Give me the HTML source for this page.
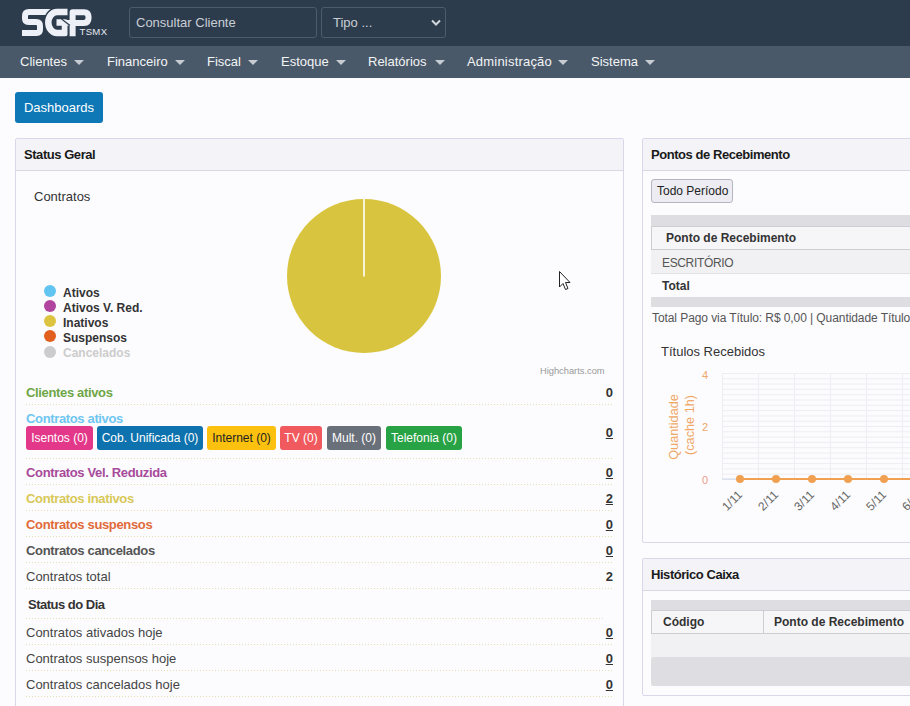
<!DOCTYPE html>
<html><head><meta charset="utf-8">
<style>
*{box-sizing:border-box;margin:0;padding:0}
html,body{width:910px;height:706px;overflow:hidden;background:#fcfcfe;font-family:"Liberation Sans",sans-serif;color:#333;position:relative}
.a{position:absolute;white-space:nowrap}
#top{left:0;top:0;width:910px;height:46px;background:#2d3c4d}
#nav{left:0;top:46px;width:910px;height:32px;background:#4a5969}
.inp{border:1px solid #4d5b6a;border-radius:3px;height:31px;top:7px}
.ph{color:#c9cfd6;font-size:13px;top:15px}
.nv{color:#f2f4f6;font-size:13px;top:54px}
.caret{width:0;height:0;border-left:5px solid transparent;border-right:5px solid transparent;border-top:5px solid #c6ccd2;top:60px}
#btn{left:15px;top:92px;width:88px;height:31px;background:#0e78b6;border-radius:3px;color:#fff;font-size:13px;line-height:31px;text-align:center}
.panel{border:1px solid #d8d8e8;border-radius:2px;background:#fcfcfe}
.ph2{background:#f4f4f8;border-bottom:1px solid #d8d8e2;height:32px}
.ptitle{font-size:13px;font-weight:bold;color:#1a1a1a;letter-spacing:-0.45px}
.rt{font-size:13px;font-weight:bold;letter-spacing:-0.35px}
.rn{font-size:13px;color:#444}
.ln{height:1px;background:repeating-linear-gradient(90deg,#e6e0b0 0 1px,transparent 1px 3px);left:26px;width:586px}
.val{font-size:13px;font-weight:bold;color:#333;left:601px;width:12px;text-align:right}
.u{text-decoration:underline}
.bd{top:426px;height:24px;border-radius:3px;font-size:12px;line-height:24px;color:#fff;text-align:center}
.lg{font-size:12px;font-weight:bold;color:#333;left:63px}
.dot{width:12px;height:12px;border-radius:50%;left:44px}
</style></head><body>
<div class="a" id="top"></div>
<div class="a" id="nav"></div>
<!-- logo -->
<svg class="a" style="left:0px;top:0px" width="120" height="46" viewBox="0 0 120 46">
<g fill="none" stroke="#eef0f7" stroke-width="6" stroke-linejoin="round">
<path d="M52 12 L29 12 Q25 12 25 16 L25 18.5 Q25 22 28.5 22 L36 22 Q40 22 40 26 L40 29.5 Q40 33 36.5 33 L22 33"/>
</g>
<path d="M57 8.2 A 12.2 14.3 0 0 0 44.6 22.5 A 12.2 14.3 0 0 0 57 36.8" fill="none" stroke="#2d3c4d" stroke-width="2"/>
<g fill="none" stroke="#eef0f7" stroke-width="6.5" stroke-linejoin="round">
<path d="M67.5 12 L57 12 A 8.7 10.5 0 0 0 48.3 22.5 A 8.7 10.5 0 0 0 57 33 L65 33 L65 22.5 L56.5 22.5"/>
<path d="M72.6 36.2 L72.6 12.2 L84 12.2 Q88.6 12.2 88.6 17.6 Q88.6 23 84 23 L66 23" stroke-width="6"/>
</g>
<path d="M61.5 19 L70 25.5" stroke="#2d3c4d" stroke-width="1.2"/>
<path d="M68.2 36.5 L68.2 25.5" stroke="#2d3c4d" stroke-width="1.4"/>
<text x="79.5" y="34.8" font-family="Liberation Sans" font-size="9.6" fill="#e6e9f0" letter-spacing="0.3">TSMX</text>
</svg>
<div class="a inp" style="left:129px;width:188px"></div>
<div class="a ph" style="left:136px">Consultar Cliente</div>
<div class="a inp" style="left:321px;width:125px"></div>
<div class="a ph" style="left:333px">Tipo ...</div>
<svg class="a" style="left:430px;top:18px" width="12" height="10" viewBox="0 0 12 10"><path d="M2 2.5 L6 6.5 L10 2.5" stroke="#d0d6dc" stroke-width="2" fill="none"/></svg>

<div class="a nv" style="left:20px">Clientes</div><div class="a caret" style="left:74px"></div>
<div class="a nv" style="left:107px">Financeiro</div><div class="a caret" style="left:175px"></div>
<div class="a nv" style="left:207px">Fiscal</div><div class="a caret" style="left:248px"></div>
<div class="a nv" style="left:281px">Estoque</div><div class="a caret" style="left:336px"></div>
<div class="a nv" style="left:368px">Relatórios</div><div class="a caret" style="left:435px"></div>
<div class="a nv" style="left:467px;letter-spacing:0.2px">Administração</div><div class="a caret" style="left:558px"></div>
<div class="a nv" style="left:591px">Sistema</div><div class="a caret" style="left:645px"></div>

<div class="a" id="btn">Dashboards</div>

<!-- left panel -->
<div class="a panel" style="left:15px;top:138px;width:609px;height:600px"></div>
<div class="a ph2" style="left:16px;top:139px;width:607px"></div>
<div class="a ptitle" style="left:24px;top:147px">Status Geral</div>

<div class="a" style="left:34px;top:189px;font-size:13px;color:#333">Contratos</div>
<svg class="a" style="left:280px;top:190px" width="170" height="170" viewBox="0 0 170 170">
<circle cx="84" cy="86" r="77" fill="#d8c43e"/>
<line x1="84" y1="9" x2="84" y2="86.5" stroke="#fff" stroke-width="1.6"/>
</svg>
<div class="a dot" style="top:285px;background:#62c4f0"></div>
<div class="a dot" style="top:300px;background:#b0449e"></div>
<div class="a dot" style="top:315px;background:#dcc440"></div>
<div class="a dot" style="top:330px;background:#e2601e"></div>
<div class="a dot" style="top:346px;background:#cccccc"></div>
<div class="a lg" style="top:286px">Ativos</div>
<div class="a lg" style="top:301px">Ativos V. Red.</div>
<div class="a lg" style="top:316px">Inativos</div>
<div class="a lg" style="top:331px">Suspensos</div>
<div class="a lg" style="top:346px;color:#cccccc">Cancelados</div>
<div class="a" style="left:540px;top:366px;font-size:9.3px;color:#999">Highcharts.com</div>
<!-- cursor -->
<svg class="a" style="left:558px;top:270px" width="14" height="22" viewBox="0 0 14 22"><path d="M1.5 1.5 L1.5 17 L5 13.5 L7.5 19.5 L10 18.5 L7.5 12.5 L12 12.5 Z" fill="#fff" stroke="#222" stroke-width="1"/></svg>

<!-- rows -->
<div class="a rt" style="left:26px;top:385px;color:#6ea648">Clientes ativos</div>
<div class="a val" style="top:385px">0</div>
<div class="a ln" style="top:404px"></div>
<div class="a rt" style="left:26px;top:411px;color:#6ec6f0">Contratos ativos</div>
<div class="a val u" style="top:425px">0</div>
<div class="a bd" style="left:26px;width:67px;background:#e3388a">Isentos (0)</div>
<div class="a bd" style="left:97px;width:106px;background:#0d72ad">Cob. Unificada (0)</div>
<div class="a bd" style="left:207px;width:69px;background:#fcc10f;color:#222">Internet (0)</div>
<div class="a bd" style="left:280px;width:42px;background:#f05a5e">TV (0)</div>
<div class="a bd" style="left:327px;width:54px;background:#6a7079">Mult. (0)</div>
<div class="a bd" style="left:386px;width:76px;background:#27a244">Telefonia (0)</div>
<div class="a ln" style="top:458px"></div>
<div class="a rt" style="left:26px;top:465px;color:#a74a9a">Contratos Vel. Reduzida</div>
<div class="a val u" style="top:465px">0</div>
<div class="a ln" style="top:484px"></div>
<div class="a rt" style="left:26px;top:491px;color:#d8c858">Contratos inativos</div>
<div class="a val u" style="top:491px">2</div>
<div class="a ln" style="top:510px"></div>
<div class="a rt" style="left:26px;top:517px;color:#e06a3a">Contratos suspensos</div>
<div class="a val u" style="top:517px">0</div>
<div class="a ln" style="top:536px"></div>
<div class="a rt" style="left:26px;top:543px;color:#555">Contratos cancelados</div>
<div class="a val u" style="top:543px">0</div>
<div class="a ln" style="top:562px"></div>
<div class="a rn" style="left:26px;top:569px">Contratos total</div>
<div class="a val" style="top:569px">2</div>
<div class="a ln" style="top:588px"></div>
<div class="a rt" style="left:28px;top:597px;color:#333;letter-spacing:-0.5px">Status do Dia</div>
<div class="a ln" style="top:618px;width:578px"></div>
<div class="a rn" style="left:26px;top:625px">Contratos ativados hoje</div>
<div class="a val u" style="top:625px">0</div>
<div class="a ln" style="top:644px"></div>
<div class="a rn" style="left:26px;top:651px">Contratos suspensos hoje</div>
<div class="a val u" style="top:651px">0</div>
<div class="a ln" style="top:670px"></div>
<div class="a rn" style="left:26px;top:677px">Contratos cancelados hoje</div>
<div class="a val u" style="top:677px">0</div>
<div class="a ln" style="top:696px"></div>

<!-- right panel -->
<div class="a panel" style="left:642px;top:138px;width:300px;height:405px"></div>
<div class="a ph2" style="left:643px;top:139px;width:300px"></div>
<div class="a ptitle" style="left:651px;top:147px">Pontos de Recebimento</div>

<div class="a" style="left:651px;top:179px;width:82px;height:24px;background:#ececf2;border:1px solid #b6b6c2;border-radius:3px"></div>
<div class="a" style="left:657px;top:184px;font-size:12px;color:#222">Todo Período</div>
<div class="a" style="left:651px;top:215px;width:270px;height:11px;background:#dedee2"></div>
<div class="a" style="left:651px;top:226px;width:270px;height:24px;background:#f6f6f8;border:1px solid #cdcdd4"></div>
<div class="a" style="left:666px;top:231px;font-size:12px;font-weight:bold;color:#333">Ponto de Recebimento</div>
<div class="a" style="left:651px;top:250px;width:270px;height:24px;background:#f1f1f3;border-bottom:1px solid #e2e2e6"></div>
<div class="a" style="left:662px;top:256px;font-size:12px;color:#555;letter-spacing:-0.35px">ESCRITÓRIO</div>
<div class="a" style="left:662px;top:279px;font-size:12px;font-weight:bold;color:#333">Total</div>
<div class="a" style="left:651px;top:297px;width:270px;height:10px;background:#dedee2"></div>
<div class="a" style="left:652px;top:311px;font-size:12px;color:#555;letter-spacing:-0.08px">Total Pago via Título: R$ 0,00 | Quantidade Títulos: 0</div>

<div class="a" style="left:661px;top:344px;font-size:13px;color:#333">Títulos Recebidos</div>
<svg class="a" style="left:643px;top:330px" width="267" height="212" viewBox="643 330 267 212">
<g stroke="#ededf4" stroke-width="1">
<line x1="723" y1="373.5" x2="910" y2="373.5"/>
<line x1="723" y1="378.8" x2="910" y2="378.8"/>
<line x1="723" y1="384.1" x2="910" y2="384.1"/>
<line x1="723" y1="389.4" x2="910" y2="389.4"/>
<line x1="723" y1="394.7" x2="910" y2="394.7"/>
<line x1="723" y1="400.0" x2="910" y2="400.0"/>
<line x1="723" y1="405.3" x2="910" y2="405.3"/>
<line x1="723" y1="410.6" x2="910" y2="410.6"/>
<line x1="723" y1="415.9" x2="910" y2="415.9"/>
<line x1="723" y1="421.2" x2="910" y2="421.2"/>
<line x1="723" y1="426.5" x2="910" y2="426.5"/>
<line x1="723" y1="431.8" x2="910" y2="431.8"/>
<line x1="723" y1="437.1" x2="910" y2="437.1"/>
<line x1="723" y1="442.4" x2="910" y2="442.4"/>
<line x1="723" y1="447.7" x2="910" y2="447.7"/>
<line x1="723" y1="453.0" x2="910" y2="453.0"/>
<line x1="723" y1="458.3" x2="910" y2="458.3"/>
<line x1="723" y1="463.6" x2="910" y2="463.6"/>
<line x1="723" y1="468.9" x2="910" y2="468.9"/>
<line x1="723" y1="474.2" x2="910" y2="474.2"/>
<line x1="723" y1="479.5" x2="910" y2="479.5"/>
<line x1="722.5" y1="373" x2="722.5" y2="479"/>
<line x1="758.5" y1="373" x2="758.5" y2="479"/>
<line x1="794.5" y1="373" x2="794.5" y2="479"/>
<line x1="830.5" y1="373" x2="830.5" y2="479"/>
<line x1="866.5" y1="373" x2="866.5" y2="479"/>
<line x1="902.5" y1="373" x2="902.5" y2="479"/>
</g>
<line x1="722" y1="479" x2="910" y2="479" stroke="#ccd6eb" stroke-width="1"/>
<line x1="740" y1="479" x2="910" y2="479" stroke="#f0a050" stroke-width="1.8"/>
<circle cx="740" cy="479" r="4" fill="#f0a050"/>
<text x="743" y="495.5" transform="rotate(-45 743 495.5)" text-anchor="end" font-family="Liberation Sans" font-size="12" fill="#666">1/11</text>
<circle cx="776" cy="479" r="4" fill="#f0a050"/>
<text x="779" y="495.5" transform="rotate(-45 779 495.5)" text-anchor="end" font-family="Liberation Sans" font-size="12" fill="#666">2/11</text>
<circle cx="812" cy="479" r="4" fill="#f0a050"/>
<text x="815" y="495.5" transform="rotate(-45 815 495.5)" text-anchor="end" font-family="Liberation Sans" font-size="12" fill="#666">3/11</text>
<circle cx="848" cy="479" r="4" fill="#f0a050"/>
<text x="851" y="495.5" transform="rotate(-45 851 495.5)" text-anchor="end" font-family="Liberation Sans" font-size="12" fill="#666">4/11</text>
<circle cx="884" cy="479" r="4" fill="#f0a050"/>
<text x="887" y="495.5" transform="rotate(-45 887 495.5)" text-anchor="end" font-family="Liberation Sans" font-size="12" fill="#666">5/11</text>
<circle cx="920" cy="479" r="4" fill="#f0a050"/>
<text x="923" y="495.5" transform="rotate(-45 923 495.5)" text-anchor="end" font-family="Liberation Sans" font-size="12" fill="#666">6/11</text>
<text x="708" y="379" text-anchor="end" font-family="Liberation Sans" font-size="11" fill="#eea66a">4</text>
<text x="708" y="431" text-anchor="end" font-family="Liberation Sans" font-size="11" fill="#eea66a">2</text>
<text x="708" y="484" text-anchor="end" font-family="Liberation Sans" font-size="11" fill="#ec9a8a">0</text>
<text transform="translate(678 427) rotate(-90)" text-anchor="middle" font-family="Liberation Sans" font-size="12.7" fill="#f0a868">Quantidade</text>
<text transform="translate(694 425) rotate(-90)" text-anchor="middle" font-family="Liberation Sans" font-size="12.7" fill="#f0a868">(cache 1h)</text>
</svg>
<!-- historico -->
<div class="a panel" style="left:642px;top:558px;width:300px;height:138px"></div>
<div class="a ph2" style="left:643px;top:559px;width:300px"></div>
<div class="a ptitle" style="left:651px;top:567px">Histórico Caixa</div>
<div class="a" style="left:651px;top:600px;width:270px;height:10px;background:#dedee2"></div>
<div class="a" style="left:651px;top:610px;width:270px;height:24px;background:#f6f6f8;border:1px solid #cdcdd4"></div>
<div class="a" style="left:763px;top:610px;width:1px;height:24px;background:#cdcdd4"></div>
<div class="a" style="left:663px;top:615px;font-size:12px;font-weight:bold;color:#333">Código</div>
<div class="a" style="left:774px;top:615px;font-size:12px;font-weight:bold;color:#333">Ponto de Recebimento</div>
<div class="a" style="left:651px;top:634px;width:270px;height:23px;background:#f1f1f3"></div>
<div class="a" style="left:651px;top:657px;width:270px;height:29px;background:#dedee2;border-radius:2px"></div>

</body></html>
